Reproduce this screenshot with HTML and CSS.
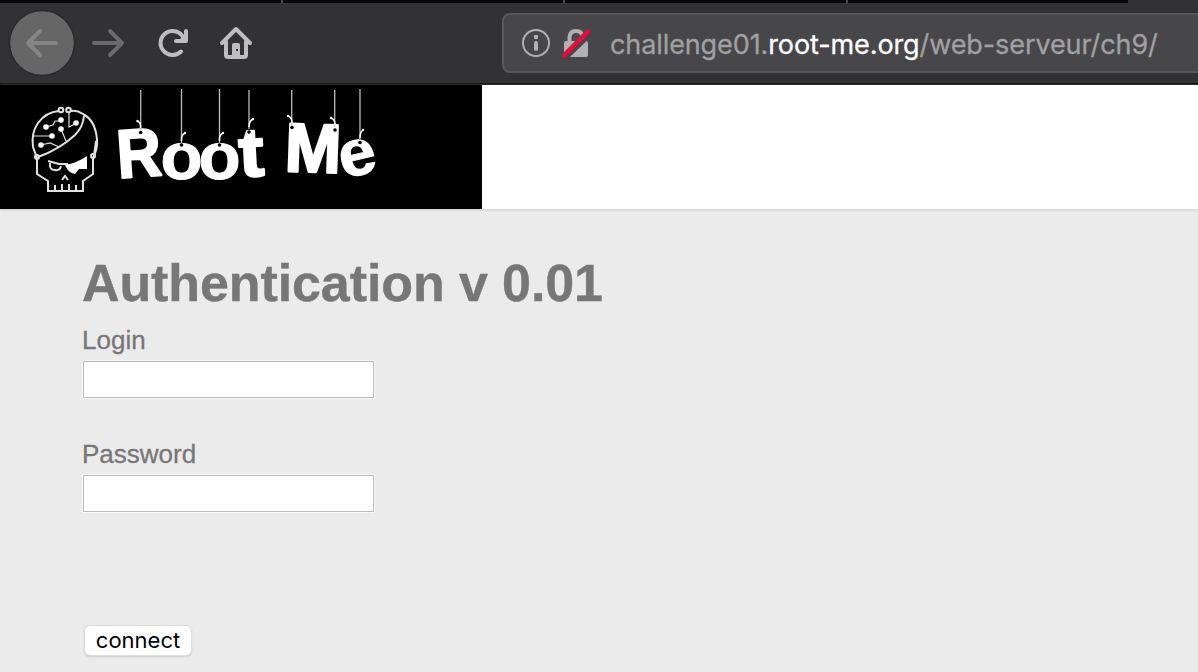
FILE: index.html
```html
<!DOCTYPE html>
<html lang="en">
<head>
<meta charset="utf-8">
<title>Authentication v 0.01</title>
<link rel="stylesheet" href="styles.css">
</head>
<body>
<div class="tabs"><i></i><i></i><i></i><i></i></div>
<nav class="toolbar">
  <svg class="nav-icons" viewBox="0 3 280 80" width="280" height="80">
    <circle cx="42" cy="43" r="32.500" fill="#666667" stroke="#29292a" stroke-width="1.500"/>
    <g fill="none" stroke-width="4" stroke-linecap="round" stroke-linejoin="round">
      <path stroke="#858586" d="M56 43H28M40 31L28 43L40 55"/>
      <path stroke="#6b6b6d" d="M94 43H122M110 31L122 43L110 55"/>
      <g stroke="#bebebf"><path d="M181 51.500A12 12 0 1 1 183.500 38"/><path d="M186 31V41H176"/>
      <path d="M222 43L236 29L250 43M226 41V55Q226 57 228 57H244Q246 57 246 55V41"/></g>
    </g>
    <path fill="#bebebf" d="M183 36L186 31V41H178Z"/>
    <path fill="#bebebf" d="M232 57V45Q232 43 234 43H238Q240 43 240 45V57Z"/>
    <rect x="236" y="49" width="2" height="2" fill="#323234"/>
  </svg>
  <div class="address">
    <svg class="status" viewBox="520 27 72 32" width="72" height="32">
      <circle cx="536" cy="43" r="13" fill="none" stroke="#b1b1b3" stroke-width="2"/>
      <circle cx="536" cy="37" r="2.200" fill="#b1b1b3"/><path d="M536 43V49" stroke="#b1b1b3" stroke-width="4" stroke-linecap="round"/>
      <rect x="564" y="41" width="24" height="16" rx="2" fill="#b1b1b3"/>
      <path d="M569.500 42V37Q570 31 576 31Q582 31 582.500 37V42" fill="none" stroke="#b1b1b3" stroke-width="4"/>
      <path d="M566 58L591 34" stroke="#474749" stroke-width="4"/>
      <path d="M564 55L588 31" stroke="#ff0039" stroke-width="4" stroke-linecap="round"/>
    </svg>
    <span class="url">challenge01.<b>root-me.org</b>/web-serveur/ch9/</span>
  </div>
</nav>
<header class="banner">
  <svg class="logo" viewBox="0 85 482 124" width="482" height="124">
    <g fill="none" stroke="#e2e2e2" stroke-width="2">
      <path d="M59 111Q46 112 38 123Q31 133 33 147L37 158V174L48 181V191H83V181L93 174V158Q98 148 97 139Q95 120 83 114Q77 110 71 111"/>
      <path d="M38 157Q60 149 75 135Q83 127 84 116M96 141L94 156"/>
      <path stroke-width="1.200" d="M34 136H52M41 145L50 143L59 147M46 127L53 125L55 121H61M61 129L66 141M69 113V127L75 124"/>
      <circle cx="61" cy="110" r="2.300"/><circle cx="68.500" cy="110" r="2.300"/><circle cx="37" cy="157" r="2"/><circle cx="93" cy="156" r="2"/>
      <path d="M48 161L59 164L68 164M50 163Q49 170 55 170Q60 171 61 166M62 180L65 176L68 180M55 191V185M62 191V184M69 191V184M76 191V185"/>
    </g>
    <path fill="#fff" d="M65 165Q77 163 87 156V169L79 169L75 174Q69 173 66 167Z"/>
    <g fill="#fff"><circle cx="46" cy="127" r="2.800"/><circle cx="61" cy="120" r="2.800"/><circle cx="61" cy="129" r="2.800"/><circle cx="52" cy="136" r="2.800"/><circle cx="41" cy="145" r="2.800"/><circle cx="76" cy="123" r="2.800"/></g>
    <g class="letters">
      <text transform="translate(140.500 176.500) rotate(-4) scale(.9 1)" font-size="68">R</text>
      <text class="thin" transform="translate(181.500 179) scale(1.030 1)" font-size="67">o</text>
      <text class="thin" transform="translate(219.500 179) scale(1.030 1)" font-size="67">o</text>
      <text transform="translate(252.500 176) rotate(-3) scale(1.080 1)" font-size="69">t</text>
      <text transform="translate(312.500 172) rotate(2) scale(.98 1)" font-size="69">M</text>
      <text class="thin" transform="translate(361.500 174.500) rotate(-13) scale(1.030 1)" font-size="65">e</text>
    </g>
    <g stroke="#bbb" stroke-width="1.300"><path d="M140.700 90V130M181.500 89V143M219.500 89V143M249 90V129M291.700 90V126M334.700 90V127M360 89V140"/></g>
    <g fill="none" stroke="#fff" stroke-width="1.500"><path d="M140.500 128Q141 122 137 121M181.500 141Q181 135 185 133M219.500 141Q219 135 223 133M249 127Q249 121 253 119M292 123Q292 117 288 116M335 125Q335 119 331 118M360 138Q360 132 363 130"/></g>
    <g fill="#fff"><circle cx="137.500" cy="121" r="1.200"/><circle cx="185" cy="133" r="1.200"/><circle cx="223" cy="133" r="1.200"/><circle cx="253" cy="119" r="1.200"/><circle cx="288" cy="116" r="1.200"/><circle cx="331" cy="118" r="1.200"/><circle cx="363" cy="130" r="1.200"/></g>
    <g fill="#000"><circle cx="140.700" cy="132.500" r="1.800"/><circle cx="181.500" cy="145" r="1.800"/><circle cx="219.500" cy="145" r="1.800"/><circle cx="249" cy="132" r="1.800"/><circle cx="292" cy="127.500" r="1.800"/><circle cx="335" cy="130" r="1.800"/><circle cx="360" cy="142.500" r="1.800"/></g>
  </svg>
</header>
<main class="content">
  <h1>Authentication v 0.01</h1>
  <form>
    <label class="field">Login<input type="text"></label>
    <label class="field">Password<input type="password"></label>
    <button type="button">connect</button>
  </form>
</main>
</body>
</html>
```

FILE: styles.css
```css
* { box-sizing: border-box; }
body {
  margin: 0;
  height: 672px;
  overflow: hidden;
  background: #ebebeb;
  color: #777;
  font: 26px/30px "Liberation Sans", Arial, sans-serif;
}
.tabs {
  display: flex;
  gap: 2px;
  width: 1128px;
  height: 3px;
  background: #48484a;
  box-shadow: 70px 0 #323234;
}
.tabs i { flex: 1; background: #08080a; }
.toolbar {
  display: flex;
  height: 82px;
  background: #323234;
  border-bottom: 2px solid #0c0c0d;
}
.nav-icons { flex: none; }
.address {
  display: flex;
  align-items: center;
  flex: none;
  width: 720px;
  height: 60px;
  margin: 10px 0 0 222px;
  padding-left: 16px;
  border: 2px solid #58585a;
  border-radius: 8px;
  background: #474749;
}
.status { flex: none; }
.url {
  margin-left: 18px;
  padding-top: 3px;
  color: #a0a0a2;
  font: 27px/32px Inter, sans-serif;
  letter-spacing: -0.1px;
  -webkit-text-stroke: 0.3px;
  white-space: nowrap;
}
.url b { color: #fff; font-weight: 400; }
.banner {
  height: 124px;
  background: #fff;
  box-shadow: 0 1px 3px #ccc;
}
.logo { display: block; background: #000; }
.letters {
  fill: #fff;
  stroke: #fff;
  stroke-width: 2.5px;
  stroke-linejoin: round;
  font-family: "Liberation Sans", Arial, sans-serif;
  font-weight: 700;
  text-anchor: middle;
}
.letters .thin { stroke-width: 1px; }
.content { padding: 44px 82px 0; }
h1 { margin: 0; font-size: 52px; line-height: 60px; letter-spacing: -0.1px; -webkit-text-stroke: 0.4px; }
form { display: flex; flex-direction: column; align-items: flex-start; padding-top: 12px; }
.field { display: flex; flex-direction: column; height: 114px; -webkit-text-stroke: 0.3px; }
input {
  width: 291px;
  height: 37px;
  margin: 6px 0 0 1px;
  padding: 0 6px;
  border: 1px solid #bbb;
  box-shadow: 0 0 0 1px #f8f8f8;
  background: #fff;
}
button {
  width: 106px;
  height: 29px;
  margin: 73px 0 0 3px;
  padding: 0;
  border: 0;
  border-radius: 5px;
  background: #fff;
  box-shadow: 0 0 0 1px #ddd, 0 1px 2px 1px #ccc;
  color: #000;
  font: 22px/29px Inter, sans-serif;
}
```
